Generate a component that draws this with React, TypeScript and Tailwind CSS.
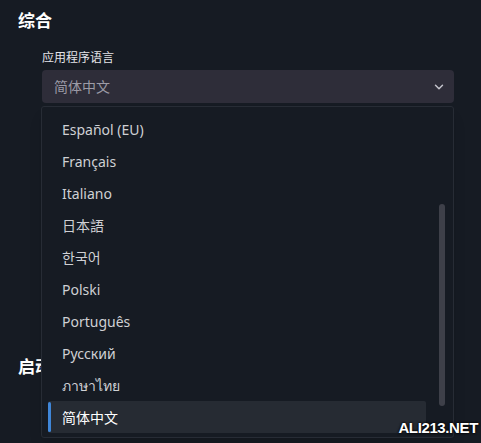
import { ChevronDown } from "lucide-react";

const languages = [
  "Español (EU)",
  "Français",
  "Italiano",
  "日本語",
  "한국어",
  "Polski",
  "Português",
  "Русский",
  "ภาษาไทย",
  "简体中文",
];

const font = "font-['Noto_Sans','Noto_Sans_CJK_SC',sans-serif]";

export default function App() {
  const selected = "简体中文";

  return (
    <div className={`relative h-[443px] w-[481px] overflow-hidden bg-[#161b23] ${font}`}>
      <div className="px-[18px] pt-[9px]">
        <h2 className="text-[17px] font-bold leading-6 text-white">综合</h2>

        <div className="ml-6 mt-[17px]">
          <label className="block text-[12px] leading-4 text-[#e4e4e8]">应用程序语言</label>
          <div className="mt-[4px] flex h-[33px] w-[412px] items-center justify-between rounded-[4px] bg-[#2e2d39] pl-3 pr-2">
            <span className="text-[14px] text-[#9c9ba6]">简体中文</span>
            <ChevronDown className="h-[14px] w-[14px] text-[#c4c4cc]" strokeWidth={2.5} />
          </div>
        </div>

        <h2 className="mt-[252px] text-[17px] font-bold leading-6 text-white">启动</h2>
      </div>

      {/* dropdown list, overlays the page */}
      <div className="absolute left-[41px] top-[106px] h-[332px] w-[413px] rounded-[3px] border border-[#272c35] bg-[#161b23] shadow-lg">
        <div className="flex pt-[6px]">
          <ul className="flex-1 pl-[6px]">
            {languages.map((lang) => {
              const active = lang === selected;
              return (
                <li
                  key={lang}
                  className={`flex h-[32px] w-[378px] items-center rounded-[2px] text-[14px] ${
                    active ? "bg-[#262b33] text-white" : "text-[#cfd0d4]"
                  }`}
                >
                  <span className={`h-[30px] w-[3px] rounded-sm ${active ? "bg-[#3f86d8]" : "bg-transparent"}`} />
                  <span className="pl-[11px]">{lang}</span>
                </li>
              );
            })}
          </ul>
          <div className="mr-[8px] mt-[91px] h-[202px] w-[6px] rounded-full bg-[#3e4049]" />
        </div>
      </div>

      <div className="absolute bottom-[4px] right-[3px] text-[15px] font-bold tracking-tight text-white [text-shadow:0_0_2px_#000,0_0_3px_#000] font-['Liberation_Sans',sans-serif]">
        ALI213.NET
      </div>
    </div>
  );
}
